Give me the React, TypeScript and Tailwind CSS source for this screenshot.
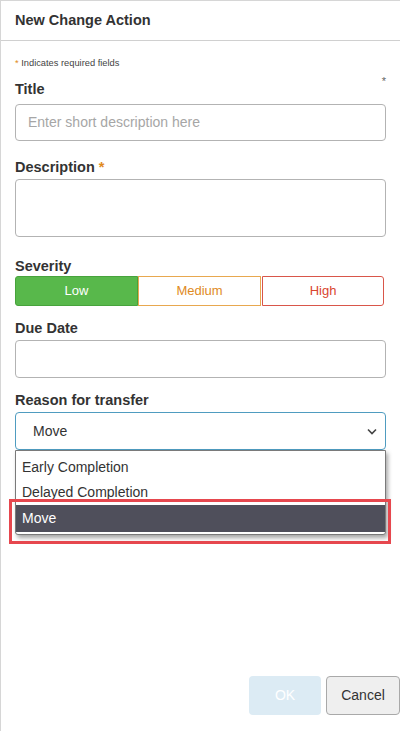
import React from "react";

export default function App() {
  const font = { fontFamily: '"Liberation Sans", Arial, sans-serif' };
  return (
    <div className="w-[408px] h-[741px] bg-white" style={font}>
      <div className="relative w-[400px] h-[731px] border-l border-t border-[#d6d6d6] flex flex-col">
        <div className="h-[40px] border-b border-[#d0d0d0] flex items-center pl-[14px] text-[14.5px] font-bold text-[#333]">
          New Change Action
        </div>
        <div className="flex-1 pl-[14px] pr-[15px] flex flex-col">
          <div className="mt-[16px] text-[9.3px] text-[#444] leading-[12px]">
            <span className="text-[#e08a1e]">*</span> Indicates required fields
          </div>
          <div className="mt-[11px] flex justify-between items-start">
            <span className="text-[14.5px] font-bold text-[#333] leading-[18px]">Title</span>
            <span className="text-[11px] text-[#666] leading-[10px] -mt-[4px] mr-[-1px]">*</span>
          </div>
          <div className="mt-[6px] h-[37px] w-[371px] border border-[#b3b3b3] rounded-[4px] flex items-center pl-[12px] text-[14px] text-[#a6a6a6]">
            Enter short description here
          </div>
          <div className="mt-[17px] text-[14.5px] font-bold text-[#333] leading-[18px]">
            Description <span className="text-[#e08a1e]">*</span>
          </div>
          <div className="mt-[3px] h-[58px] w-[371px] border border-[#b3b3b3] rounded-[4px]" />
          <div className="mt-[20px] text-[14.5px] font-bold text-[#333] leading-[18px]">Severity</div>
          <div className="mt-[1px] flex w-[371px] h-[30px]">
            <div className="w-[123px] bg-[#58b84b] border border-[#47a33c] rounded-l-[3px] flex items-center justify-center text-[13px] text-white">
              Low
            </div>
            <div className="w-[123px] border border-[#e8a84f] flex items-center justify-center text-[13px] text-[#e08a1e]">
              Medium
            </div>
            <div className="w-[122px] ml-[1px] border border-[#d9564a] rounded-r-[3px] flex items-center justify-center text-[13px] text-[#d9452f]">
              High
            </div>
          </div>
          <div className="mt-[13px] text-[14.5px] font-bold text-[#333] leading-[18px]">Due Date</div>
          <div className="mt-[3px] h-[38px] w-[371px] border border-[#b3b3b3] rounded-[4px]" />
          <div className="mt-[13px] text-[14.5px] font-bold text-[#333] leading-[18px]">Reason for transfer</div>
          <div className="relative mt-[3px] w-[371px]">
            <div className="h-[38px] border border-[#4f9cc0] rounded-[4px] flex items-center justify-between pl-[17px] pr-[8px] text-[14px] text-[#333]">
              <span>Move</span>
              <svg width="10" height="7" viewBox="0 0 10 7" fill="none">
                <path d="M1 1.5L5 5.5L9 1.5" stroke="#444" strokeWidth="1.6" />
              </svg>
            </div>
            <div className="absolute left-0 top-[38px] w-[371px] h-[85px] bg-white border border-[#7a7a7a] rounded-b-[3px] shadow-[2px_3px_4px_rgba(0,0,0,0.35)] text-[14px] text-[#333] flex flex-col pt-[4px]">
              <div className="h-[25px] flex items-center pl-[6px]">Early Completion</div>
              <div className="h-[25px] flex items-center pl-[6px]">Delayed Completion</div>
              <div className="h-[27px] flex items-center pl-[6px] bg-[#4f4f5b] text-white">Move</div>
            </div>
            <div className="absolute left-[-6px] top-[87px] w-[382px] h-[45px] border-[3px] border-[#e6474e]" />
          </div>
          <div className="flex-1" />
          <div className="flex justify-end gap-[5px] mb-[16px] mr-[-15px]">
            <div className="w-[72px] h-[39px] bg-[#dcebf4] rounded-[4px] flex items-center justify-center text-[14px] text-white">
              OK
            </div>
            <div className="w-[74px] h-[39px] bg-[#efefef] border border-[#a9a9a9] rounded-[4px] flex items-center justify-center text-[14px] text-[#333]">
              Cancel
            </div>
          </div>
        </div>
      </div>
    </div>
  );
}
